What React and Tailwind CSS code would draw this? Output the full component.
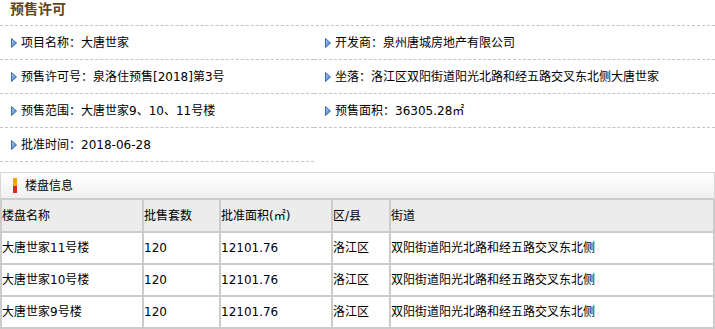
import React from "react";

const font = { fontFamily: '"DejaVu Sans", "Noto Sans CJK SC", sans-serif' };

function Arrow() {
    return (
        <svg width="6" height="10" viewBox="0 0 6 10" className="shrink-0">
            <defs>
                <linearGradient id="arw" x1="0" y1="0" x2="1" y2="1">
                    <stop offset="0" stopColor="#b9d8f8" />
                    <stop offset="1" stopColor="#2f68bb" />
                </linearGradient>
            </defs>
            <polygon points="0.5,0.5 5.5,5 0.5,9.5" fill="url(#arw)" stroke="#3769b3" strokeWidth="1" />
        </svg>
    );
}

function Item({ label, value, noLine }) {
    return (
        <div className={`h-[34px] flex items-center gap-[4px] pl-[11px] ${noLine ? "" : "border-b border-dashed border-[#c4c4c4]"}`}>
            {label && (
                <>
                    <Arrow />
                    <span className="text-[12px] text-black whitespace-nowrap">{label}：{value}</span>
                </>
            )}
        </div>
    );
}

export default function App() {
    const info = [
        ["项目名称", "大唐世家", "开发商", "泉州唐城房地产有限公司"],
        ["预售许可号", "泉洛住预售[2018]第3号", "坐落", "洛江区双阳街道阳光北路和经五路交叉东北侧大唐世家"],
        ["预售范围", "大唐世家9、10、11号楼", "预售面积", "36305.28㎡"],
        ["批准时间", "2018-06-28", "", ""],
    ];

    const rows = [
        ["大唐世家11号楼", "120", "12101.76", "洛江区", "双阳街道阳光北路和经五路交叉东北侧"],
        ["大唐世家10号楼", "120", "12101.76", "洛江区", "双阳街道阳光北路和经五路交叉东北侧"],
        ["大唐世家9号楼", "120", "12101.76", "洛江区", "双阳街道阳光北路和经五路交叉东北侧"],
    ];

    const heads = ["楼盘名称", "批售套数", "批准面积(㎡)", "区/县", "街道"];

    return (
        <div className="w-[715px] h-[329px] bg-white overflow-hidden" style={font}>
            <div className="h-[26px] border-b border-dashed border-[#c4c4c4] pl-[10px]">
                <h1 className="text-[14px] leading-[18px] font-bold text-[#654518]">预售许可</h1>
            </div>

            <div className="grid grid-cols-[314px_1fr]">
                {info.map((r, i) => (
                    <React.Fragment key={i}>
                        <Item label={r[0]} value={r[1]} />
                        <Item label={r[2]} value={r[3]} noLine={!r[2]} />
                    </React.Fragment>
                ))}
            </div>

            <div className="mt-[10px] h-[26px] border border-b-0 border-[#d6d6d6] bg-gradient-to-b from-white to-[#f0f0f0] flex items-center pl-[12px] gap-[8px]">
                <div className="w-[4px] h-[15px] flex flex-col">
                    <div className="h-1/2 bg-[#f7a21b]" />
                    <div className="h-1/2 bg-[#e3262b]" />
                </div>
                <span className="text-[12px] text-black">楼盘信息</span>
            </div>

            <div className="grid grid-cols-[140px_75px_110px_56px_1fr] gap-[2px] p-[2px] bg-[#cccccc] text-[12px] text-black">
                {heads.map((h) => (
                    <div key={h} className="h-[31px] bg-[#ececec] flex items-center whitespace-nowrap">{h}</div>
                ))}
                {rows.map((r, i) =>
                    r.map((c, j) => (
                        <div key={`${i}-${j}`} className="h-[30px] bg-white flex items-center whitespace-nowrap">{c}</div>
                    ))
                )}
            </div>
        </div>
    );
}
